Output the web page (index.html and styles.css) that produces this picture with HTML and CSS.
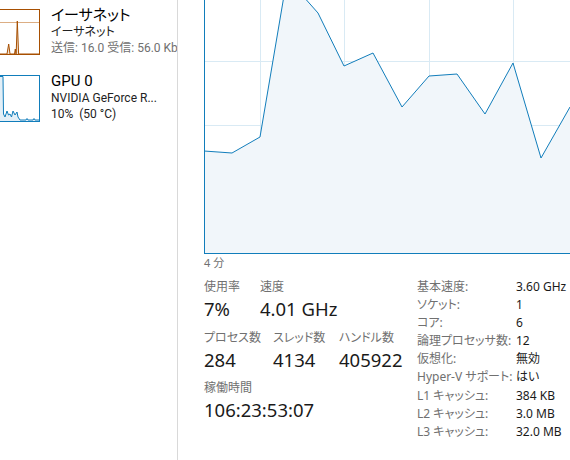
FILE: index.html
```html
<!DOCTYPE html>
<html lang="ja">

<head>
    <meta charset="UTF-8">
    <meta name="viewport" content="width=device-width, initial-scale=1.0">
    <title>パフォーマンス - CPU</title>

    <link rel="stylesheet" href="styles.css">
</head>

<body>
    <div class="app">
        <aside class="sidebar">
            <div class="perf-item">
                <svg class="thumb" width="40" height="46" viewBox="0 0 40 46">
                    <line class="thumb-ref" x1="0" y1="13.5" x2="39" y2="13.5" />
                    <path class="thumb-fill eth" d="M0 45 L7 45 L8.7 35 L10 45 L14.5 45 L15.3 40 L16 45 L16.2 44 L17.3 12 L18.6 45 L39 45 Z" />
                    <path class="thumb-line eth" d="M0 45 L7 45 L8.7 35 L10 45 L14.5 45 L15.3 40 L16 45 L16.2 44 L17.3 12 L18.6 45 L39 45" />
                    <rect class="thumb-box eth" x="-0.5" y="0.5" width="40" height="45" />
                </svg>
                <div class="perf-text">
                    <div class="perf-title">イーサネット</div>
                    <div class="perf-sub">イーサネット</div>
                    <div class="perf-meta">送信: 16.0 受信: 56.0 Kb</div>
                </div>
            </div>

            <div class="perf-item">
                <svg class="thumb" width="40" height="47" viewBox="0 0 40 47">
                    <path class="thumb-fill gpu" d="M0 1.5 L3 1.5 L3.5 39 L5 42 L7 36 L8.5 40 L10 39 L11.5 42 L13 36 L15 40 L17 37 L18 42 L20 45 L26 45 L27 43.5 L28 45 L33 45 L34 43.5 L35 45 L39 45 L39 46 L0 46 Z" />
                    <path class="thumb-line gpu" d="M0 1.5 L3 1.5 L3.5 39 L5 42 L7 36 L8.5 40 L10 39 L11.5 42 L13 36 L15 40 L17 37 L18 42 L20 45 L26 45 L27 43.5 L28 45 L33 45 L34 43.5 L35 45 L39 45" />
                    <rect class="thumb-box gpu" x="-0.5" y="0.5" width="40" height="46" />
                </svg>
                <div class="perf-text">
                    <div class="perf-title">GPU 0</div>
                    <div class="perf-sub">NVIDIA GeForce R...</div>
                    <div class="perf-sub">10%&nbsp; (50 °C)</div>
                </div>
            </div>
        </aside>

        <main class="detail">
            <svg class="graph" width="366" height="254" viewBox="0 0 366 254">
                <g class="grid">
                    <line x1="0" y1="61.5" x2="366" y2="61.5" />
                    <line x1="0" y1="125.5" x2="366" y2="125.5" />
                    <line x1="0" y1="189.5" x2="366" y2="189.5" />
                    <line x1="56.5" y1="0" x2="56.5" y2="254" />
                    <line x1="140.5" y1="0" x2="140.5" y2="254" />
                    <line x1="225.5" y1="0" x2="225.5" y2="254" />
                    <line x1="309.5" y1="0" x2="309.5" y2="254" />
                </g>
                <path class="usage-fill" d="M0 151 L28 153 L56 137 L83 -22 L114 13 L140 66 L169 53 L198 107 L225 76 L253 74 L281 114 L309 63 L337 158 L366 107 L366 253 L0 253 Z" />
                <path class="usage-line" d="M0 151 L28 153 L56 137 L83 -22 L114 13 L140 66 L169 53 L198 107 L225 76 L253 74 L281 114 L309 63 L337 158 L366 107" />
                <line class="graph-edge" x1="0.5" y1="0" x2="0.5" y2="254" />
                <line class="graph-edge" x1="0" y1="253.5" x2="366" y2="253.5" />
            </svg>
            <div class="axis-label">4 分</div>

            <div class="stats">
                <div class="stats-live">
                    <div class="stat-row usage-row">
                        <div class="stat">
                            <div class="stat-label">使用率</div>
                            <div class="stat-value">7%</div>
                        </div>
                        <div class="stat">
                            <div class="stat-label">速度</div>
                            <div class="stat-value">4.01 GHz</div>
                        </div>
                    </div>
                    <div class="stat-row count-row">
                        <div class="stat">
                            <div class="stat-label">プロセス数</div>
                            <div class="stat-value">284</div>
                        </div>
                        <div class="stat">
                            <div class="stat-label">スレッド数</div>
                            <div class="stat-value">4134</div>
                        </div>
                        <div class="stat">
                            <div class="stat-label">ハンドル数</div>
                            <div class="stat-value">405922</div>
                        </div>
                    </div>
                    <div class="stat-row">
                        <div class="stat">
                            <div class="stat-label">稼働時間</div>
                            <div class="stat-value">106:23:53:07</div>
                        </div>
                    </div>
                </div>

                <dl class="specs">
                    <dt>基本速度:</dt><dd>3.60 GHz</dd>
                    <dt>ソケット:</dt><dd>1</dd>
                    <dt>コア:</dt><dd>6</dd>
                    <dt>論理プロセッサ数:</dt><dd>12</dd>
                    <dt>仮想化:</dt><dd>無効</dd>
                    <dt>Hyper-V サポート:</dt><dd>はい</dd>
                    <dt>L1 キャッシュ:</dt><dd>384 KB</dd>
                    <dt>L2 キャッシュ:</dt><dd>3.0 MB</dd>
                    <dt>L3 キャッシュ:</dt><dd>32.0 MB</dd>
                </dl>
            </div>
        </main>
    </div>
</body>

</html>
```

FILE: styles.css
```css
:root {
    --cpu: #117dbb;
    --eth: #a74f01;
    --label: #707070;
    --text: #1a1a1a;
}

html,
body {
    margin: 0;
    background: #fff;
}

body {
    font-family: "Noto Sans", "Noto Sans CJK JP", sans-serif;
    font-feature-settings: "palt";
    color: var(--text);
}

.app {
    display: flex;
    width: 570px;
    height: 460px;
    overflow: hidden;
}

/* left list */

.sidebar {
    flex: 0 0 177px;
    border-right: 1px solid #d9d9d9;
    padding-top: 6px;
    overflow: hidden;
    font-family: Roboto, "Noto Sans CJK JP", sans-serif;
}

.perf-item {
    display: flex;
    gap: 11px;
    height: 66px;
}

.thumb {
    flex: 0 0 40px;
    margin-top: 3px;
    overflow: hidden;
}

.thumb-box {
    fill: none;
    stroke-width: 1;
}

.thumb-box.eth,
.thumb-line.eth {
    stroke: var(--eth);
}

.thumb-box.gpu,
.thumb-line.gpu {
    stroke: var(--cpu);
}

.thumb-line {
    fill: none;
    stroke-width: 1;
}

.thumb-fill.eth {
    fill: #f3e3d2;
}

.thumb-fill.gpu {
    fill: #e3eff7;
}

.thumb-ref {
    stroke: #dcae84;
    stroke-width: 1;
}

.perf-text {
    min-width: 0;
    white-space: nowrap;
}

.perf-title {
    font-size: 15px;
    line-height: 18px;
    color: #000;
}

.perf-sub,
.perf-meta {
    font-size: 12px;
    line-height: 16px;
    color: #222;
}

.perf-meta {
    color: var(--label);
}

/* right panel */

.detail {
    flex: 1;
    min-width: 0;
    padding-left: 26px;
    overflow: hidden;
}

.graph {
    display: block;
    overflow: hidden;
}

.grid line {
    stroke: #d9eaf4;
    stroke-width: 1;
}

.usage-fill {
    fill: #f1f6fa;
}

.usage-line {
    fill: none;
    stroke: var(--cpu);
    stroke-width: 1;
}

.graph-edge {
    stroke: var(--cpu);
    stroke-width: 1;
}

.axis-label {
    margin-top: 1px;
    font-size: 11px;
    line-height: 16px;
    color: var(--label);
}

.stats {
    display: flex;
    margin-top: 8px;
}

.stats-live {
    flex: 0 0 213px;
    display: flex;
    flex-direction: column;
    gap: 8.5px;
}

.stat-row {
    display: grid;
    grid-template-columns: auto;
}

.usage-row {
    grid-template-columns: 56px auto;
}

.count-row {
    grid-template-columns: 69px 66px auto;
}

.stat-label {
    font-size: 12px;
    line-height: 16px;
    color: var(--label);
    white-space: nowrap;
}

.stat-value {
    margin-top: 2px;
    font-size: 18.5px;
    line-height: 24px;
    white-space: nowrap;
}

.specs {
    display: grid;
    grid-template-columns: 99px auto;
    grid-auto-rows: 18.1px;
    margin: -1px 0 0;
    font-size: 12px;
    line-height: 18px;
}

.specs dt {
    color: var(--label);
    white-space: nowrap;
}

.specs dd {
    margin: 0;
    white-space: nowrap;
}
```
